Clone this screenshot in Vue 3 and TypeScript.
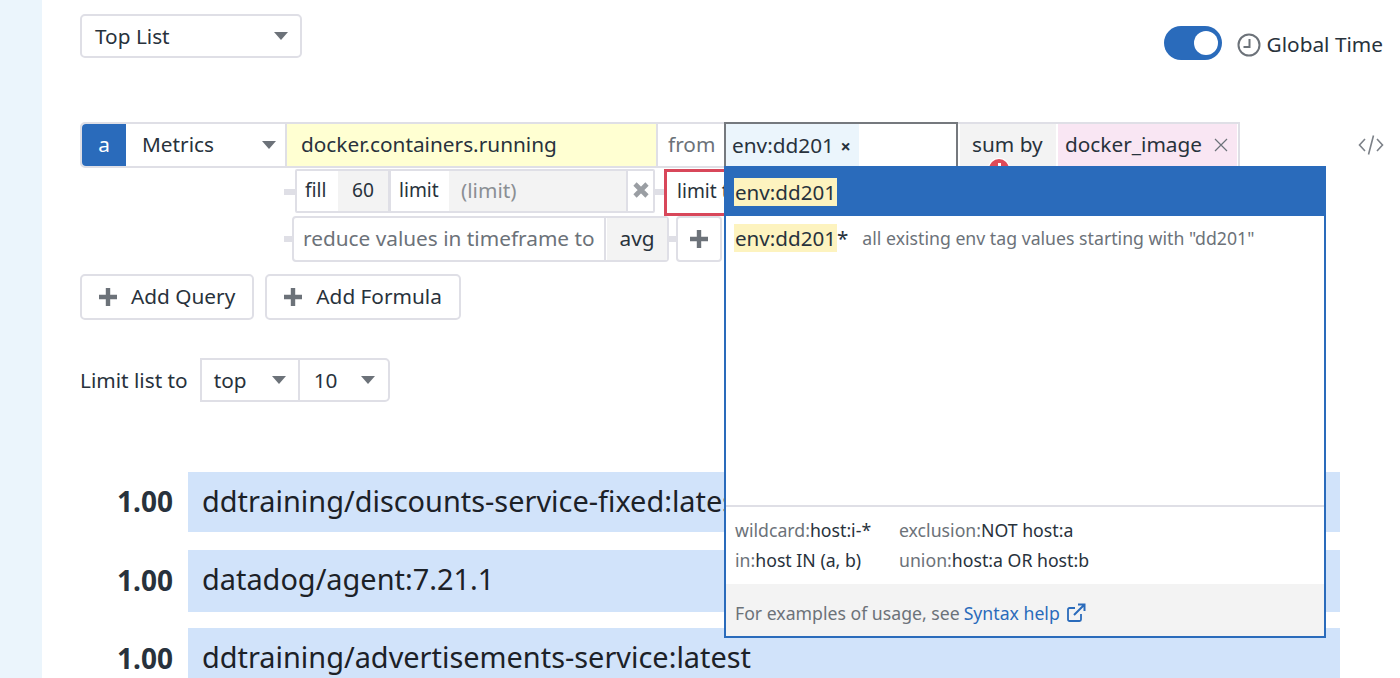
<template>
  <div class="page">
    <aside class="rail"></aside>
    <main class="main">
      <div class="top">
        <div class="select type-select">
          <span>Top List</span>
          <i class="caret"></i>
        </div>
        <div class="global-time">
          <span class="toggle"><span class="knob"></span></span>
          <svg class="clock" viewBox="0 0 24 24" width="24" height="24">
            <circle cx="12" cy="12" r="10.5" fill="none" stroke="#6c7279" stroke-width="2" />
            <path d="M12.500 6v8H6.500" fill="none" stroke="#6c7279" stroke-width="2" />
          </svg>
          <span class="global-label">Global Time</span>
        </div>
      </div>

      <div class="query-line">
        <div class="query">
          <div class="q-letter">a</div>
          <div class="q-source">
            <span>Metrics</span>
            <i class="caret"></i>
          </div>
          <div class="q-metric">docker.containers.running</div>
          <div class="q-from">from</div>
          <div class="q-tags">
            <span class="tag">env:dd201 <b>×</b></span>
          </div>
          <div class="q-sumby">
            sum by
            <span class="error-dot"></span>
          </div>
          <div class="q-group">
            <span>docker_image</span>
            <svg viewBox="0 0 14 14" width="14" height="14">
              <path d="M1 1l12 12M13 1L1 13" stroke="#6c7279" stroke-width="1.2" fill="none" />
            </svg>
          </div>
        </div>
        <svg class="code-icon" viewBox="0 0 26 22" width="26" height="22">
          <path d="M7 5L1.500 11 7 17M19 5l5.500 6L19 17M15.500 1.500l-5 19" stroke="#7c8188" stroke-width="1.6" fill="none" />
        </svg>
      </div>

      <div class="fn-line fill-line">
        <i class="link"></i>
        <div class="fn-group">
          <span class="fn-cell fn-fill">fill</span>
          <span class="fn-cell fn-value">60</span>
          <span class="fn-cell fn-limit">limit</span>
          <span class="fn-cell fn-placeholder">(limit)</span>
          <span class="fn-cell fn-remove">
            <svg viewBox="0 0 18 18" width="18" height="18">
              <path d="M3 3l12 12M15 3L3 15" stroke="#9a9ea3" stroke-width="4.6" fill="none" />
            </svg>
          </span>
        </div>
        <i class="link short"></i>
        <div class="fn-error">limit to</div>
      </div>

      <div class="fn-line reduce-line">
        <i class="link narrow"></i>
        <div class="fn-group">
          <span class="fn-cell fn-reduce">reduce values in timeframe to</span>
          <span class="fn-cell fn-avg">avg</span>
        </div>
        <i class="link tiny"></i>
        <div class="fn-plus">
          <svg viewBox="0 0 20 20" width="20" height="20">
            <path d="M10 1v18M1 10h18" stroke="#6c7279" stroke-width="4.4" fill="none" />
          </svg>
        </div>
      </div>

      <div class="actions">
        <button v-for="label in addButtons" :key="label" class="add-btn">
          <svg viewBox="0 0 20 20" width="20" height="20">
            <path d="M10 1v18M1 10h18" stroke="#6c7279" stroke-width="4.4" fill="none" />
          </svg>
          <span class="add-label">{{ label }}</span>
        </button>
      </div>

      <div class="limit-line">
        <span>Limit list to</span>
        <div class="limit-selects">
          <div class="limit-select first"><span>top</span><i class="caret"></i></div>
          <div class="limit-select second"><span>10</span><i class="caret"></i></div>
        </div>
      </div>

      <div class="toplist">
        <div v-for="row in rows" :key="row.name" class="top-row">
          <span class="top-value">{{ row.value }}</span>
          <span class="top-bar">{{ row.name }}</span>
        </div>
      </div>

      <div class="dropdown">
        <div class="opt-selected"><mark>env:dd201</mark></div>
        <div class="opt-wild">
          <mark>env:dd201</mark><span class="star">*</span>
          <span class="opt-hint">all existing env tag values starting with "dd201"</span>
        </div>
        <div class="hints">
          <div v-for="pair in hints" :key="pair[0].key" class="hint-row">
            <span class="hint hint-left"><em>{{ pair[0].key }}:</em>{{ pair[0].text }}</span>
            <span class="hint"><em>{{ pair[1].key }}:</em>{{ pair[1].text }}</span>
          </div>
        </div>
        <div class="syntax">
          <span>For examples of usage, see</span>
          <a>Syntax help</a>
          <svg viewBox="0 0 20 20" width="20" height="20">
            <path d="M15 11v5.500a1.500 1.500 0 0 1-1.500 1.500h-10A1.500 1.500 0 0 1 2 16.500v-10A1.500 1.500 0 0 1 3.500 5H9" fill="none" stroke="#2a6bbb" stroke-width="1.8" />
            <path d="M8 12L18 2M12 1.500h6.500V8" fill="none" stroke="#2a6bbb" stroke-width="2" />
          </svg>
        </div>
      </div>
    </main>
  </div>
</template>

<script setup lang="ts">
const addButtons = ["Add Query", "Add Formula"];

const rows = [
  { value: "1.00", name: "ddtraining/discounts-service-fixed:latest" },
  { value: "1.00", name: "datadog/agent:7.21.1" },
  { value: "1.00", name: "ddtraining/advertisements-service:latest" },
];

const hints = [
  [
    { key: "wildcard", text: "host:i-*" },
    { key: "exclusion", text: "NOT host:a" },
  ],
  [
    { key: "in", text: "host IN (a, b)" },
    { key: "union", text: "host:a OR host:b" },
  ],
];
</script>

<style>
html,
body {
  margin: 0;
  background: #fff;
  overflow: hidden;
}
</style>

<style scoped>
.page {
  display: flex;
  height: 678px;
  overflow: hidden;
  font-family: "Noto Sans", sans-serif;
  color: #28323c;
  background: #fff;
}

.rail {
  width: 42px;
  flex-shrink: 0;
  background: #ebf5fc;
}

.main {
  position: relative;
  flex: 1;
  padding: 14px 16px 0 38px;
  min-width: 0;
}

.caret {
  display: block;
  width: 0;
  height: 0;
  border-left: 7px solid transparent;
  border-right: 7px solid transparent;
  border-top: 8px solid #6c7279;
  flex-shrink: 0;
}

.top {
  display: flex;
  justify-content: space-between;
  align-items: flex-start;
  height: 108px;
}

.select {
  display: flex;
  align-items: center;
  justify-content: space-between;
  box-sizing: border-box;
  border: 2px solid #dfdfe6;
  border-radius: 5px;
}

.type-select {
  width: 222px;
  height: 44px;
  padding: 0 12px 0 13px;
  font-size: 20.8px;
}

.global-time {
  display: flex;
  align-items: center;
  margin: 12px 1px 0 0;
  font-size: 20.8px;
  height: 34px;
}

.toggle {
  display: flex;
  align-items: center;
  justify-content: flex-end;
  box-sizing: border-box;
  width: 58px;
  height: 34px;
  padding-right: 4px;
  margin-right: 15px;
  border-radius: 17px;
  background: #2a6bbb;
}

.knob {
  width: 24px;
  height: 24px;
  border-radius: 50%;
  background: #fff;
}

.clock {
  margin: 4px 6px 0 0;
}

.global-label {
  margin-top: 2px;
}

.query-line {
  display: flex;
  align-items: center;
  justify-content: space-between;
  height: 46px;
}

.query {
  display: flex;
  box-sizing: border-box;
  width: 1160px;
  height: 46px;
  border: 2px solid #dfdfe6;
  border-radius: 5px 0 0 5px;
  font-size: 20.8px;
  line-height: 40px;
}

.q-letter {
  width: 44px;
  flex-shrink: 0;
  text-align: center;
  color: #fff;
  background: #2a6bbb;
  border-radius: 4px 0 0 4px;
}

.q-source {
  display: flex;
  align-items: center;
  justify-content: space-between;
  box-sizing: border-box;
  width: 161px;
  padding: 0 9px 2px 16px;
  border-right: 2px solid #dfdfe6;
}

.q-source .caret {
  margin-top: 2px;
}

.q-metric {
  box-sizing: border-box;
  width: 369px;
  padding-left: 14px;
  background: #ffffd2;
}

.q-from {
  box-sizing: border-box;
  width: 68px;
  padding-left: 10px;
  border-left: 2px solid #dfdfe6;
  color: #6c7279;
}

.q-tags {
  box-sizing: border-box;
  width: 234px;
  height: 46px;
  margin-top: -2px;
  border: 2px solid #75797e;
  background: #fff;
  line-height: 42px;
}

.tag {
  display: inline-block;
  height: 42px;
  padding: 0 8px 0 6px;
  background: #ebf5fc;
}

.tag b {
  margin-left: 1px;
  font-size: 18px;
}

.q-sumby {
  position: relative;
  box-sizing: border-box;
  width: 96px;
  margin-left: 2px;
  padding-left: 12px;
  background: #f3f3f3;
}

.error-dot {
  position: absolute;
  left: 29px;
  bottom: -13px;
  width: 20px;
  height: 20px;
  border-radius: 50%;
  background: #de4a58;
  box-shadow: 0 0 0 1px #fff;
}

.error-dot::after {
  content: "";
  position: absolute;
  left: 8.5px;
  top: 4px;
  width: 3px;
  height: 8px;
  background: #fff;
}

.q-group {
  display: flex;
  align-items: center;
  justify-content: space-between;
  box-sizing: border-box;
  width: 179px;
  margin-left: 2px;
  padding: 0 9px 2px 7px;
  background: #f9e6f3;
}

.q-group svg {
  margin-top: 2px;
}

.fn-line {
  display: flex;
  align-items: center;
  padding-left: 204px;
  font-size: 19.2px;
}

.fill-line {
  height: 48px;
}

.reduce-line {
  height: 46px;
}

.link {
  display: block;
  width: 11px;
  height: 6px;
  flex-shrink: 0;
  background: #dfdfe6;
}

.link.short {
  width: 9px;
}

.link.narrow {
  width: 8px;
}

.link.tiny {
  width: 7px;
}

.fn-group {
  display: flex;
  box-sizing: border-box;
  border: 2px solid #dfdfe6;
  border-radius: 4px;
}

.fill-line .fn-group {
  height: 44px;
  margin-top: -3px;
  width: 360px;
  border-radius: 2px;
}

.reduce-line .fn-group {
  height: 46px;
  width: 377px;
}

.fn-cell {
  display: flex;
  align-items: center;
  box-sizing: border-box;
  padding-bottom: 2px;
}

.fn-fill {
  width: 41px;
  padding-left: 8px;
}

.fn-value {
  width: 50px;
  justify-content: center;
  background: #f3f3f3;
}

.fn-limit {
  width: 61px;
  padding-left: 8px;
  border-left: 3px solid #dfdfe6;
}

.fn-placeholder {
  width: 177px;
  padding-left: 12px;
  background: #f3f3f3;
  color: #8b8f94;
  font-size: 20.8px;
}

.fn-remove {
  flex: 1;
  justify-content: center;
  border-left: 2px solid #dfdfe6;
}

.fn-error {
  box-sizing: border-box;
  width: 120px;
  height: 47px;
  border: 3px solid #d8475a;
  padding-left: 10px;
  line-height: 38px;
}

.fn-reduce {
  width: 312px;
  padding-left: 9px;
  border-right: 2px solid #dfdfe6;
  color: #6c7279;
  font-size: 20.8px;
}

.fn-avg {
  flex: 1;
  justify-content: center;
  margin-left: 1px;
  background: #f3f3f3;
  font-size: 20.8px;
}

.fn-plus {
  display: flex;
  align-items: center;
  justify-content: center;
  box-sizing: border-box;
  width: 46px;
  height: 46px;
  border: 2px solid #dfdfe6;
  border-radius: 4px;
}

.actions {
  display: flex;
  gap: 11px;
  margin-top: 12px;
}

.add-btn {
  display: flex;
  align-items: center;
  gap: 13px;
  box-sizing: border-box;
  height: 46px;
  padding: 0 17px 0 16px;
  border: 2px solid #dfdfe6;
  border-radius: 5px;
  background: #fff;
  font: inherit;
  font-size: 20.8px;
  color: inherit;
}

.add-label {
  margin-top: -2px;
}

.limit-line {
  display: flex;
  align-items: center;
  gap: 12px;
  margin-top: 38px;
  font-size: 20.8px;
}

.limit-selects {
  display: flex;
  box-sizing: border-box;
  width: 190px;
  height: 44px;
  border: 2px solid #dfdfe6;
  border-radius: 0 5px 5px 0;
}

.limit-select {
  display: flex;
  align-items: center;
  justify-content: space-between;
  box-sizing: border-box;
}

.limit-select.first {
  width: 98px;
  padding: 0 9px 0 12px;
  border-right: 2px solid #dfdfe6;
}

.limit-select.first .caret {
  margin-right: 3px;
}

.limit-select.second {
  flex: 1;
  padding: 0 13px 0 14px;
}

.toplist {
  display: flex;
  flex-direction: column;
  margin-top: 70px;
}

.top-row {
  display: flex;
  align-items: center;
  width: 1260px;
  height: 62px;
  margin-bottom: 16px;
}

.top-row:first-child {
  height: 60px;
  margin-bottom: 18px;
}

.top-value {
  width: 108px;
  flex-shrink: 0;
  padding: 0 15px 2px 0;
  box-sizing: border-box;
  text-align: right;
  font-size: 28px;
  font-weight: 700;
}

.top-bar {
  flex: 1;
  height: 100%;
  padding-left: 14px;
  background: #d1e3fa;
  color: #1c2127;
  font-size: 28.9px;
  line-height: 58px;
  white-space: nowrap;
}

.dropdown {
  position: absolute;
  left: 682px;
  top: 166px;
  display: flex;
  flex-direction: column;
  box-sizing: border-box;
  width: 602px;
  height: 472px;
  border: 2px solid #2a6bbb;
  background: #fff;
  font-size: 20.6px;
}

mark {
  display: inline-block;
  padding: 0 1px;
  background: #fdf3bf;
  color: #28323c;
  line-height: 28px;
}

.opt-selected {
  display: flex;
  align-items: center;
  height: 48px;
  padding-left: 8px;
  background: #2a6bbb;
}

.opt-wild {
  display: flex;
  align-items: center;
  height: 44px;
  padding-left: 8px;
  flex-shrink: 0;
}

.opt-hint {
  margin-left: 14px;
  color: #6c7279;
  font-size: 17.7px;
}

.hints {
  margin-top: auto;
  padding: 8px 9px 9px;
  border-top: 2px solid #dfdfe6;
  font-size: 17.7px;
}

.hint-row {
  display: flex;
  height: 30px;
  align-items: center;
}

.hint-left {
  width: 164px;
}

.hint em {
  font-style: normal;
  color: #6c7279;
}

.syntax {
  display: flex;
  align-items: center;
  gap: 4px;
  box-sizing: border-box;
  height: 52px;
  padding: 5px 0 0 9px;
  background: #f3f3f3;
  color: #6c7279;
  font-size: 17.66px;
}

.syntax a {
  color: #2a6bbb;
}

.syntax svg {
  margin-left: 2px;
}

.code-icon {
  flex-shrink: 0;
}
</style>
